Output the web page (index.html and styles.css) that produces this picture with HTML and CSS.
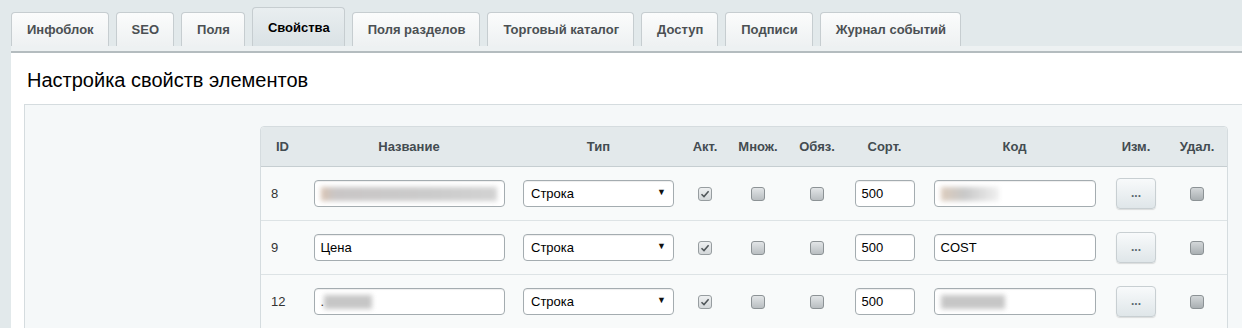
FILE: index.html
```html
<!DOCTYPE html>
<html lang="ru">
<head>
    <meta charset="UTF-8">
    <meta name="viewport" content="width=device-width, initial-scale=1.0">
    <title>Настройка свойств элементов</title>
    <link rel="stylesheet" href="styles.css">
</head>
<body>
    <div id="wrapper">
        <div class="tabs">
            <div class="tab">Инфоблок</div>
            <div class="tab">SEO</div>
            <div class="tab">Поля</div>
            <div class="tab active">Свойства</div>
            <div class="tab">Поля разделов</div>
            <div class="tab">Торговый каталог</div>
            <div class="tab">Доступ</div>
            <div class="tab">Подписи</div>
            <div class="tab">Журнал событий</div>
        </div>
        <div class="tabs-line"></div>
        <div class="content">
            <h1 class="title">Настройка свойств элементов</h1>
            <div class="box">
                <table class="props">
                    <colgroup>
                        <col class="c-id">
                        <col class="c-name">
                        <col class="c-type">
                        <col class="c-act">
                        <col class="c-mult">
                        <col class="c-req">
                        <col class="c-sort">
                        <col class="c-code">
                        <col class="c-edit">
                        <col class="c-del">
                    </colgroup>
                    <tr>
                        <th>ID</th>
                        <th>Название</th>
                        <th>Тип</th>
                        <th>Акт.</th>
                        <th>Множ.</th>
                        <th>Обяз.</th>
                        <th>Сорт.</th>
                        <th>Код</th>
                        <th>Изм.</th>
                        <th>Удал.</th>
                    </tr>
                    <tr>
                        <td class="id">8</td>
                        <td><div class="field f-name"><span class="blur blur-long"></span></div></td>
                        <td><div class="field f-type"><span>Строка</span><span class="arrow">&#9660;</span></div></td>
                        <td><span class="check on"><svg width="12" height="12" viewBox="0 0 12 12"><path d="M2.5 6.2 L5 8.6 L9.6 3.2" fill="none" stroke="#4f5558" stroke-width="1.5"/></svg></span></td>
                        <td><span class="check"></span></td>
                        <td><span class="check"></span></td>
                        <td><div class="field f-sort">500</div></td>
                        <td><div class="field f-code"><span class="blur blur-code1"></span></div></td>
                        <td><div class="btn">...</div></td>
                        <td><span class="check dark"></span></td>
                    </tr>
                    <tr>
                        <td class="id">9</td>
                        <td><div class="field f-name">Цена</div></td>
                        <td><div class="field f-type"><span>Строка</span><span class="arrow">&#9660;</span></div></td>
                        <td><span class="check on"><svg width="12" height="12" viewBox="0 0 12 12"><path d="M2.5 6.2 L5 8.6 L9.6 3.2" fill="none" stroke="#4f5558" stroke-width="1.5"/></svg></span></td>
                        <td><span class="check"></span></td>
                        <td><span class="check"></span></td>
                        <td><div class="field f-sort">500</div></td>
                        <td><div class="field f-code">COST</div></td>
                        <td><div class="btn">...</div></td>
                        <td><span class="check dark"></span></td>
                    </tr>
                    <tr>
                        <td class="id">12</td>
                        <td><div class="field f-name">.<span class="blur blur-short"></span></div></td>
                        <td><div class="field f-type"><span>Строка</span><span class="arrow">&#9660;</span></div></td>
                        <td><span class="check on"><svg width="12" height="12" viewBox="0 0 12 12"><path d="M2.5 6.2 L5 8.6 L9.6 3.2" fill="none" stroke="#4f5558" stroke-width="1.5"/></svg></span></td>
                        <td><span class="check"></span></td>
                        <td><span class="check"></span></td>
                        <td><div class="field f-sort">500</div></td>
                        <td><div class="field f-code"><span class="blur blur-code2"></span></div></td>
                        <td><div class="btn">...</div></td>
                        <td><span class="check dark"></span></td>
                    </tr>
                </table>
            </div>
        </div>
    </div>
</body>
</html>
```

FILE: styles.css
```css
body{
    margin: 0;
    background-color: #e2e9eb;
    font-family: "Liberation Sans", Arial, sans-serif;
    overflow: hidden;
}
#wrapper{
    width: 1270px;
    height: 328px;
    overflow: hidden;
}
.tabs{
    display: flex;
    align-items: flex-end;
    gap: 7px;
    height: 46px;
    padding-left: 11px;
}
.tab{
    box-sizing: border-box;
    height: 34px;
    line-height: 33px;
    padding: 0 14px 0 15px;
    border: 1px solid #c6cdd0;
    border-bottom: none;
    border-radius: 4px 4px 0 0;
    background: linear-gradient(#fbfcfc, #eef1f2);
    font-size: 13px;
    font-weight: bold;
    color: #4b5053;
}
.tab.active{
    height: 39px;
    line-height: 40px;
    background: linear-gradient(#e9eef0, #dae2e5);
    color: #000;
}
.tabs-line{
    margin-left: 11px;
    height: 5px;
    background-color: #edf1f2;
    border-bottom: 2px solid #b4bcbf;
}
.content{
    box-sizing: border-box;
    margin-left: 11px;
    height: 275px;
    padding: 16px 0 0 13px;
    background-color: #fff;
    overflow: hidden;
}
.title{
    margin: 0 0 13px 3px;
    font-size: 20px;
    line-height: 22px;
    font-weight: normal;
    color: #000;
}
.box{
    height: 240px;
    padding: 21px 0 0 235px;
    border: 1px solid #d5dcdf;
    background-color: #f5f8f9;
}
.props{
    table-layout: fixed;
    width: 968px;
    border-collapse: separate;
    border-spacing: 0;
    border: 1px solid #d5dcdf;
    border-radius: 4px 4px 0 0;
    background-color: #f8fafa;
}
.c-id{ width: 43px; }
.c-name{ width: 210px; }
.c-type{ width: 169px; }
.c-act{ width: 44px; }
.c-mult{ width: 62px; }
.c-req{ width: 56px; }
.c-sort{ width: 79px; }
.c-code{ width: 181px; }
.c-edit{ width: 62px; }
.c-del{ width: 60px; }
.props th{
    height: 39px;
    padding: 0;
    background-color: #e3e9eb;
    border-bottom: 1px solid #c6ced1;
    font-size: 13px;
    font-weight: bold;
    color: #434c51;
    text-align: center;
}
.props th:first-child{
    border-top-left-radius: 4px;
}
.props th:last-child{
    border-top-right-radius: 4px;
}
.props td{
    height: 53px;
    padding: 0;
    border-bottom: 1px solid #dde3e5;
    text-align: center;
    vertical-align: middle;
}
.props td.id{
    text-align: left;
    padding-left: 10px;
    font-size: 13px;
    color: #333;
}
.field{
    box-sizing: border-box;
    display: inline-flex;
    align-items: center;
    height: 27px;
    padding: 0 6px;
    border: 1px solid #a4acb0;
    border-radius: 4px;
    background-color: #fff;
    box-shadow: inset 0 1px 1px rgba(0,0,0,0.07);
    font-size: 13px;
    color: #000;
    text-align: left;
    vertical-align: middle;
}
.f-name{ width: 191px; }
.f-type{
    width: 151px;
    justify-content: space-between;
    padding: 0 7px;
}
.f-sort{ width: 60px; }
.f-code{ width: 162px; }
.arrow{
    font-size: 9px;
    color: #111;
    margin-top: -4px;
}
.blur{
    display: inline-block;
    height: 14px;
    background-color: #c6c6c6;
    filter: blur(2.5px);
}
.blur-long{
    width: 176px;
    background: linear-gradient(90deg, #d9c3b2, #c9c6c6 8%, #cbcbcb 60%, #d2d2d2);
}
.blur-short{
    width: 48px;
}
.blur-code1{
    width: 58px;
    background: linear-gradient(90deg, #dccbbc, #c8c8c8 40%, #f0f0f0);
}
.blur-code2{
    width: 64px;
}
.check{
    box-sizing: border-box;
    display: inline-flex;
    align-items: center;
    justify-content: center;
    width: 14px;
    height: 14px;
    border: 1px solid #8c9295;
    border-radius: 3px;
    background: linear-gradient(#e2e5e7, #b9bec1);
    vertical-align: middle;
}
.check.on{
    background: linear-gradient(#eef0f1, #d3d7d9);
    border-color: #979da0;
}
.check.dark{
    background: linear-gradient(#d3d7d9, #a9afb2);
}
.btn{
    box-sizing: border-box;
    display: inline-block;
    width: 40px;
    height: 31px;
    line-height: 29px;
    border: 1px solid #c8cfd2;
    border-radius: 4px;
    background: linear-gradient(#f8fafb, #dfe6e9);
    box-shadow: 0 1px 1px rgba(0,0,0,0.12);
    font-size: 12px;
    font-weight: bold;
    color: #5a686f;
    vertical-align: middle;
}
```
